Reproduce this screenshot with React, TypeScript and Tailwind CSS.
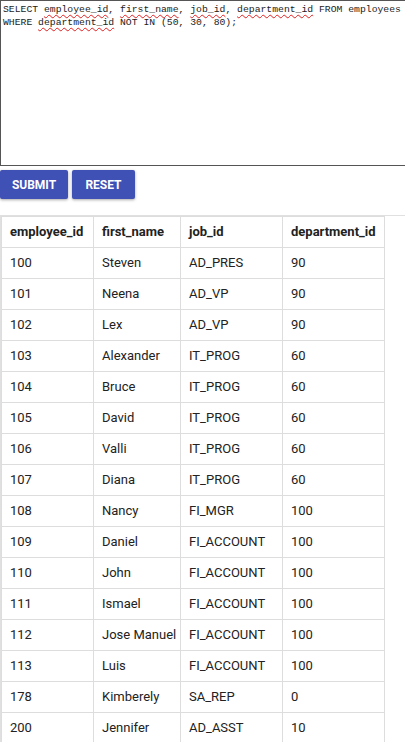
import React from "react";

const rows: [string, string, string, string][] = [
  ["100", "Steven", "AD_PRES", "90"],
  ["101", "Neena", "AD_VP", "90"],
  ["102", "Lex", "AD_VP", "90"],
  ["103", "Alexander", "IT_PROG", "60"],
  ["104", "Bruce", "IT_PROG", "60"],
  ["105", "David", "IT_PROG", "60"],
  ["106", "Valli", "IT_PROG", "60"],
  ["107", "Diana", "IT_PROG", "60"],
  ["108", "Nancy", "FI_MGR", "100"],
  ["109", "Daniel", "FI_ACCOUNT", "100"],
  ["110", "John", "FI_ACCOUNT", "100"],
  ["111", "Ismael", "FI_ACCOUNT", "100"],
  ["112", "Jose Manuel", "FI_ACCOUNT", "100"],
  ["113", "Luis", "FI_ACCOUNT", "100"],
  ["178", "Kimberely", "SA_REP", "0"],
  ["200", "Jennifer", "AD_ASST", "10"],
];

const colW = ["w-[92px]", "w-[87px]", "w-[102px]", "w-[102px]"];

function Sq({ children }: { children: React.ReactNode }) {
  return (
    <span className="underline decoration-wavy decoration-[#e02020] decoration-[1px] underline-offset-[2px]">
      {children}
    </span>
  );
}

export default function App() {
  return (
    <div className="w-[405px] overflow-hidden bg-white font-['Roboto',sans-serif] text-[#212121]">
      <div className="h-[166px] border-t border-l border-b border-[#555] pl-[2px] pt-[2px] font-['Liberation_Mono',monospace] text-[9.75px] leading-[13px] text-[#222] whitespace-pre">
        <div>
          SELECT <Sq>employee_id</Sq>, <Sq>first_name</Sq>, <Sq>job_id</Sq>, <Sq>department_id</Sq> FROM employees
        </div>
        <div>
          WHERE <Sq>department_id</Sq> NOT IN (50, 30, 80);
        </div>
      </div>
      <div className="mt-[4px] flex gap-[4px]">
        <button className="h-[29px] w-[68px] rounded-[2px] bg-[#3f51b5] text-[12px] font-bold text-white shadow-[0_1px_3px_rgba(0,0,0,0.35)]">
          SUBMIT
        </button>
        <button className="h-[29px] w-[63px] rounded-[2px] bg-[#3f51b5] text-[12px] font-bold text-white shadow-[0_1px_3px_rgba(0,0,0,0.35)]">
          RESET
        </button>
      </div>
      <div className="mt-[16px] border-t border-l border-[#e0e0e0]">
        <table className="w-[383px] table-fixed border-collapse text-[13px] text-[#222]">
          <colgroup>
            {colW.map((w, i) => (
              <col key={i} className={w} />
            ))}
          </colgroup>
          <thead>
            <tr>
              {["employee_id", "first_name", "job_id", "department_id"].map((h) => (
                <th
                  key={h}
                  className="border border-[#dddddd] px-2 py-[7px] text-left font-bold leading-[16px] whitespace-nowrap"
                >
                  {h}
                </th>
              ))}
            </tr>
          </thead>
          <tbody>
            {rows.map((r) => (
              <tr key={r[0]}>
                {r.map((c, i) => (
                  <td
                    key={i}
                    className="border border-[#dddddd] px-2 py-[7px] leading-[16px] whitespace-nowrap"
                  >
                    {c}
                  </td>
                ))}
              </tr>
            ))}
          </tbody>
        </table>
      </div>
    </div>
  );
}
